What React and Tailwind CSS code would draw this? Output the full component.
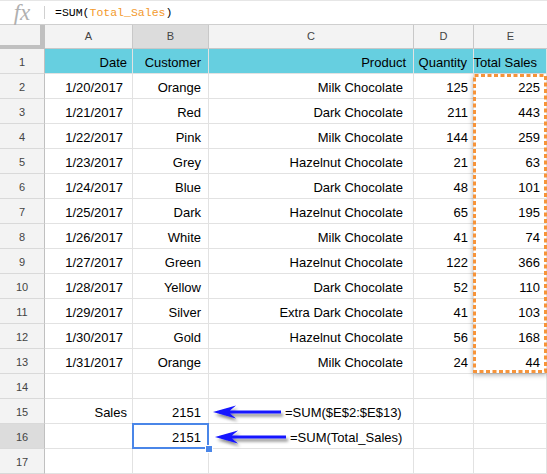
import React from 'react';

const rows = [
    ['1/20/2017', 'Orange', 'Milk Chocolate', '125', '225'],
    ['1/21/2017', 'Red', 'Dark Chocolate', '211', '443'],
    ['1/22/2017', 'Pink', 'Milk Chocolate', '144', '259'],
    ['1/23/2017', 'Grey', 'Hazelnut Chocolate', '21', '63'],
    ['1/24/2017', 'Blue', 'Dark Chocolate', '48', '101'],
    ['1/25/2017', 'Dark', 'Hazelnut Chocolate', '65', '195'],
    ['1/26/2017', 'White', 'Milk Chocolate', '41', '74'],
    ['1/27/2017', 'Green', 'Hazelnut Chocolate', '122', '366'],
    ['1/28/2017', 'Yellow', 'Dark Chocolate', '52', '110'],
    ['1/29/2017', 'Silver', 'Extra Dark Chocolate', '41', '103'],
    ['1/30/2017', 'Gold', 'Hazelnut Chocolate', '56', '168'],
    ['1/31/2017', 'Orange', 'Milk Chocolate', '24', '44'],
];

function RowHead({ n, active }) {
    return (
        <div
            className={`w-[45px] h-[25px] shrink-0 flex items-center justify-center pt-[2px] border-r border-b border-r-[#c0c0c0] border-b-[#d9d9d9] text-[11px] text-[#444] ${active ? 'bg-[#dcdcdc]' : 'bg-[#f3f3f3]'}`}
        >
            {n}
        </div>
    );
}

function Cell({ w, pr = 'pr-[7px]', children, className = '' }) {
    return (
        <div
            className={`${w} h-[25px] shrink-0 flex items-center justify-end pt-[3px] border-r border-b border-[#e2e2e2] ${pr} whitespace-nowrap ${className}`}
        >
            {children}
        </div>
    );
}

function DataRow({ n, cells = [], active }) {
    return (
        <div className="flex">
            <RowHead n={n} active={active} />
            <Cell w="w-[88px]" pr="pr-[9px]">{cells[0]}</Cell>
            <Cell w="w-[76px]" pr="pr-[7px]">{cells[1]}</Cell>
            <Cell w="w-[205px]" pr="pr-[10px]">{cells[2]}</Cell>
            <Cell w="w-[60px]" pr="pr-[5px]">{cells[3]}</Cell>
            <Cell w="w-[73px]" pr="pr-[6px]">{cells[4]}</Cell>
        </div>
    );
}

export default function App() {
    return (
        <div
            className="relative w-[547px] h-[474px] overflow-hidden bg-white text-[13px] text-black"
            style={{ fontFamily: '"Liberation Sans", Arial, sans-serif' }}
        >
            {/* Formula bar */}
            <div className="h-[25px] flex items-center border-t border-t-[#e6e6e6] border-b border-b-[#cfcfcf]">
                <div className="w-[44px] flex justify-center">
                    <span
                        className="text-[23px] italic text-[#b0b0b0] leading-none"
                        style={{ fontFamily: '"Liberation Serif", serif' }}
                    >
                        fx
                    </span>
                </div>
                <div className="w-px h-[13px] bg-[#d0d0d0]" />
                <div
                    className="pl-[10px] text-[11.5px] text-black"
                    style={{ fontFamily: '"Liberation Mono", monospace' }}
                >
                    =SUM(<span className="text-[#f39a2c]">Total_Sales</span>)
                </div>
            </div>

            {/* Column headers */}
            <div className="flex h-[24px] text-[11px] text-[#444]">
                <div className="w-[45px] h-[24px] shrink-0 bg-[#f3f3f3] border-r-[5px] border-b-[4px] border-[#c0c0c0]" />
                <div className="w-[88px] shrink-0 flex items-center justify-center bg-[#f3f3f3] border-r border-b border-[#c8c8c8]">A</div>
                <div className="w-[76px] shrink-0 flex items-center justify-center bg-[#dcdcdc] border-r border-b border-[#c8c8c8]">B</div>
                <div className="w-[205px] shrink-0 flex items-center justify-center bg-[#f3f3f3] border-r border-b border-[#c8c8c8]">C</div>
                <div className="w-[60px] shrink-0 flex items-center justify-center bg-[#f3f3f3] border-r border-b border-[#c8c8c8]">D</div>
                <div className="w-[73px] shrink-0 flex items-center justify-center bg-[#f3f3f3] border-b border-[#c8c8c8]">E</div>
            </div>

            {/* Header row */}
            <div className="flex">
                <RowHead n={1} />
                <Cell w="w-[88px]" pr="pr-[5px]" className="bg-[#66cfe0] border-[#5cbccb]">Date</Cell>
                <Cell w="w-[76px]" pr="pr-[7px]" className="bg-[#66cfe0] border-[#5cbccb]">Customer</Cell>
                <Cell w="w-[205px]" pr="pr-[7px]" className="bg-[#66cfe0] border-[#5cbccb]">Product</Cell>
                <Cell w="w-[60px]" pr="pr-[6px]" className="bg-[#66cfe0] border-[#5cbccb]">Quantity</Cell>
                <Cell w="w-[73px]" pr="pr-[9px]" className="bg-[#66cfe0] border-[#5cbccb]">Total Sales</Cell>
            </div>

            {rows.map((r, i) => (
                <DataRow key={i} n={i + 2} cells={r} />
            ))}

            <DataRow n={14} />

            <div className="flex">
                <RowHead n={15} />
                <Cell w="w-[88px]" pr="pr-[5px]">Sales</Cell>
                <Cell w="w-[76px]" pr="pr-[7px]">2151</Cell>
                <Cell w="w-[205px]" className="!justify-start pl-[76px]">=SUM($E$2:$E$13)</Cell>
                <Cell w="w-[60px]" />
                <Cell w="w-[73px]" />
            </div>

            <div className="flex">
                <RowHead n={16} active />
                <Cell w="w-[88px]" />
                <Cell w="w-[76px]" pr="pr-[7px]">2151</Cell>
                <Cell w="w-[205px]" className="!justify-start pl-[81px]">=SUM(Total_Sales)</Cell>
                <Cell w="w-[60px]" />
                <Cell w="w-[73px]" />
            </div>

            <DataRow n={17} />

            {/* Selected cell B16 */}
            <div className="absolute left-[132px] top-[423px] w-[77px] h-[26px] border-2 border-[#4a86e8] pointer-events-none" />
            <div className="absolute left-[205px] top-[445px] w-[6px] h-[6px] bg-[#4a86e8] border border-white box-content" />

            {/* Copied range E2:E13 */}
            <div className="absolute left-[473px] top-[74px] w-[74px] h-[299px] shadow-[0_2px_5px_rgba(0,0,0,0.3)] pointer-events-none">
                <svg width="74" height="299" className="block">
                    <rect
                        x="1.5"
                        y="1.5"
                        width="71"
                        height="296"
                        fill="none"
                        stroke="#f6943a"
                        strokeWidth="3"
                        strokeDasharray="4 2.5"
                    />
                </svg>
            </div>

            {/* Arrows */}
            <svg className="absolute left-0 top-0 pointer-events-none" width="547" height="474">
                <defs>
                    <filter id="sh" x="-20%" y="-50%" width="140%" height="200%">
                        <feDropShadow dx="2" dy="3" stdDeviation="1.8" floodColor="#000" floodOpacity="0.45" />
                    </filter>
                </defs>
                <g fill="#1414ff" filter="url(#sh)">
                    <path d="M213 412 L236 405.5 L230 410.5 L281 410.5 L281 413.5 L230 413.5 L236 418.5 Z" />
                    <path d="M215 437 L238 430.5 L232 435.5 L286 435.5 L286 438.5 L232 438.5 L238 443.5 Z" />
                </g>
            </svg>
        </div>
    );
}
